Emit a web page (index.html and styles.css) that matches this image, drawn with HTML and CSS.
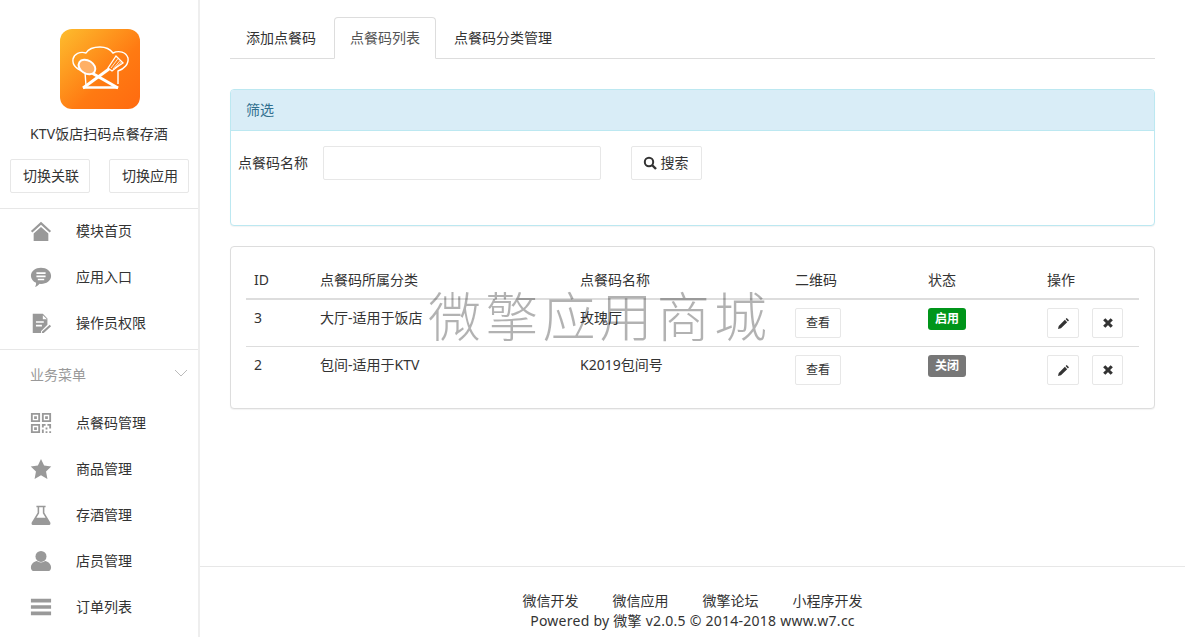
FILE: index.html
```html
<!DOCTYPE html>
<html lang="zh-CN">
<head>
    <meta charset="UTF-8">
    <title>点餐码列表</title>
    <link rel="stylesheet" href="styles.css">
</head>
<body>
    <div class="layout">
        <!-- Sidebar -->
        <aside class="sidebar">
            <div class="app-info">
                <div class="app-logo">
                    <svg viewBox="0 0 80 80" width="80" height="80">
                        <defs>
                            <linearGradient id="logoBg" x1="0" y1="0" x2="1" y2="1">
                                <stop offset="0" stop-color="#fdbd2e"/>
                                <stop offset="0.6" stop-color="#ff7a12"/>
                                <stop offset="1" stop-color="#ff6a10"/>
                            </linearGradient>
                        </defs>
                        <rect width="80" height="80" rx="12" fill="url(#logoBg)"/>
                        <path d="M25 43C17 41 12 36 13 30C14 25 20 22 26 24C29 19 35 18 40 18C46 18 50 20 53 24C59 21 66 23 68 29C69 35 64 40 58 42V55M25 43L26 57" fill="none" stroke="#fff" stroke-width="1.400"/>
                        <path d="M23 58.500H58" stroke="#fff" stroke-width="2.600"/>
                        <path d="M23 59L49 40" stroke="#fff" stroke-width="2.800"/>
                        <path d="M31 43.500L58 59" stroke="#fff" stroke-width="3"/>
                        <ellipse cx="27" cy="38" rx="9" ry="6.500" transform="rotate(32 27 38)" fill="#ffb066" stroke="#fff" stroke-width="2"/>
                        <path d="M48 39L52 33L56 27L63 34L57 38L52 42Z" fill="none" stroke="#fff" stroke-width="1.300"/>
                        <path d="M51 39L58 29.500M53 40L60 31.500M55 39L61.500 33" stroke="#fff" stroke-width="0.800"/>
                    </svg>
                </div>
                <div class="app-name">KTV饭店扫码点餐存酒</div>
                <div class="app-actions">
                    <a class="btn switch-btn">切换关联</a>
                    <a class="btn switch-btn">切换应用</a>
                </div>
            </div>

            <ul class="menu">
                <li class="menu-item">
                    <svg class="menu-icon" viewBox="0 0 24 24"><path d="M12 2L1 12l1.600 1.600L12 5.200l9.400 8.400L23 12zM12 7.600L4 14.600V23h16v-8.400z"/></svg>
                    模块首页
                </li>
                <li class="menu-item">
                    <svg class="menu-icon" viewBox="0 0 24 24"><path fill-rule="evenodd" d="M12 2c6 0 11 3.800 11 8.800s-5 8.700-11 8.700l-1.500-.1C9 21 7.500 22.500 5.500 23c.8-1.300 1.200-3 1.100-4.700C3.500 16.800 1 14 1 10.800 1 5.800 6 2 12 2zM7 6.800v1.900h10V6.800zM7 10.300v1.900h10v-1.900zm1.500 3.500v1.800h7v-1.800z"/></svg>
                    应用入口
                </li>
                <li class="menu-item">
                    <svg class="menu-icon" viewBox="0 0 24 24"><path fill-rule="evenodd" d="M3 2h11l5 5v7l-7 7v2H3zM6.500 10v1.800H15V10zm0 4v1.800H13V14zM14 3.500V8h4.500zM21.500 14l1.500 1.500-8 7.500h-2v-1.500z"/></svg>
                    操作员权限
                </li>
            </ul>

            <div class="menu-group">
                <div class="group-title">
                    业务菜单
                    <svg class="group-arrow" viewBox="0 0 14 8" width="14" height="8"><path d="M1 1l6 6 6-6" fill="none" stroke="#bbb"/></svg>
                </div>
                <ul class="menu">
                    <li class="menu-item">
                        <svg class="menu-icon" viewBox="0 0 24 24"><path fill-rule="evenodd" d="M1 1h10v10H1zm2 2v6h6V3zm1.500 1.500h3v3h-3zM13 1h10v10H13zm2 2v6h6V3zm1.500 1.500h3v3h-3zM1 13h10v10H1zm2 2v6h6v-6zm1.500 1.500h3v3h-3zM13 13h4v2h-2v2h-2zm6 0h4v5h-2v-3h-2zm-6 6h2v4h-2zm4-2h2v2h-2zm0 4h2v2h-2zm4 0h2v2h-2z"/></svg>
                        点餐码管理
                    </li>
                    <li class="menu-item">
                        <svg class="menu-icon" viewBox="0 0 24 24"><path d="M12 1l3.400 7.300 7.800 1-5.700 5.500 1.500 8L12 18.900 5 22.800l1.500-8L.8 9.300l7.800-1z"/></svg>
                        商品管理
                    </li>
                    <li class="menu-item">
                        <svg class="menu-icon" viewBox="0 0 24 24"><path fill-rule="evenodd" d="M7 2h10v1.500h-1.300v6L22 20c.8 1.500 0 3-1.700 3H3.700C2 23 1.200 21.500 2 20L8.300 9.500v-6H7zm3 1.500v6.500l-3 5h10l-3-5V3.500z"/></svg>
                        存酒管理
                    </li>
                    <li class="menu-item">
                        <svg class="menu-icon" viewBox="0 0 24 24"><circle cx="12" cy="7" r="6"/><path d="M1 19c0-4 3.500-6.500 6.500-7 1.200 1 2.800 1.500 4.500 1.500s3.300-.5 4.500-1.500c3 .5 6.500 3 6.500 7 0 2.500-1.500 4-3.500 4h-15C2.500 23 1 21.500 1 19z"/></svg>
                        店员管理
                    </li>
                    <li class="menu-item">
                        <svg class="menu-icon" viewBox="0 0 24 24"><path d="M1 3h22v4H1zM1 10h22v4H1zM1 17h22v4H1z"/></svg>
                        订单列表
                    </li>
                </ul>
            </div>
        </aside>

        <!-- Main content -->
        <div class="main">
            <div class="content">
                <ul class="tabs">
                    <li class="tab">添加点餐码</li>
                    <li class="tab active">点餐码列表</li>
                    <li class="tab">点餐码分类管理</li>
                </ul>

                <div class="panel panel-info">
                    <div class="panel-heading">筛选</div>
                    <div class="panel-body filter-body">
                        <label class="filter-label">点餐码名称</label>
                        <input class="filter-input" type="text">
                        <a class="btn search-btn">
                            <svg viewBox="0 0 14 14" width="14" height="14"><circle cx="6" cy="6" r="4.200" fill="none" stroke="#333" stroke-width="2"/><path d="M9 9l4 4" stroke="#333" stroke-width="2.400"/></svg>
                            搜索
                        </a>
                    </div>
                </div>

                <div class="panel panel-list">
                    <table class="code-table">
                        <thead>
                            <tr>
                                <th class="col-id">ID</th>
                                <th class="col-cate">点餐码所属分类</th>
                                <th class="col-name">点餐码名称</th>
                                <th class="col-qr">二维码</th>
                                <th class="col-status">状态</th>
                                <th>操作</th>
                            </tr>
                        </thead>
                        <tbody>
                            <tr>
                                <td>3</td>
                                <td>大厅-适用于饭店</td>
                                <td>玫瑰厅</td>
                                <td><a class="btn btn-sm">查看</a></td>
                                <td><span class="label label-on">启用</span></td>
                                <td>
                                    <div class="ops">
                                        <a class="btn btn-icon">
                                            <svg viewBox="0 0 12 12" width="11" height="11"><path d="M0 12l.8-3.200L7.500 2 10 4.500 3.200 11.200zM8.300 1.200L9.500 0 12 2.500 10.800 3.700z" fill="#333"/></svg>
                                        </a>
                                        <a class="btn btn-icon">
                                            <svg viewBox="0 0 12 12" width="10" height="10"><path d="M1.500 1.500l9 9M10.500 1.500l-9 9" stroke="#333" stroke-width="3.800"/></svg>
                                        </a>
                                    </div>
                                </td>
                            </tr>
                            <tr>
                                <td>2</td>
                                <td>包间-适用于KTV</td>
                                <td>K2019包间号</td>
                                <td><a class="btn btn-sm">查看</a></td>
                                <td><span class="label label-off">关闭</span></td>
                                <td>
                                    <div class="ops">
                                        <a class="btn btn-icon">
                                            <svg viewBox="0 0 12 12" width="11" height="11"><path d="M0 12l.8-3.200L7.500 2 10 4.500 3.200 11.200zM8.300 1.200L9.500 0 12 2.500 10.800 3.700z" fill="#333"/></svg>
                                        </a>
                                        <a class="btn btn-icon">
                                            <svg viewBox="0 0 12 12" width="10" height="10"><path d="M1.500 1.500l9 9M10.500 1.500l-9 9" stroke="#333" stroke-width="3.800"/></svg>
                                        </a>
                                    </div>
                                </td>
                            </tr>
                        </tbody>
                    </table>
                </div>
            </div>

            <div class="footer">
                <div class="footer-links">
                    <a>微信开发</a>
                    <a>微信应用</a>
                    <a>微擎论坛</a>
                    <a>小程序开发</a>
                </div>
                <div class="copyright">Powered by 微擎 v2.0.5 © 2014-2018 www.w7.cc</div>
            </div>
        </div>
    </div>

    <div class="watermark">微擎应用商城</div>
</body>
</html>
```

FILE: styles.css
```css
* {
    margin: 0;
    padding: 0;
    box-sizing: border-box;
}

html, body {
    height: 100%;
    overflow: hidden;
}

body {
    font-family: "Noto Sans", "Noto Sans CJK SC", sans-serif;
    font-size: 14px;
    line-height: 20px;
    color: #333;
    background: #fff;
}

ul {
    list-style: none;
}

.layout {
    display: flex;
    height: 637px;
}

/* Sidebar */
.sidebar {
    width: 200px;
    flex-shrink: 0;
    border-right: 2px solid #eee;
}

.app-info {
    padding-top: 29px;
    height: 209px;
    border-bottom: 1px solid #e7e7e7;
}

.app-logo {
    width: 80px;
    height: 80px;
    margin-left: 60px;
}

.app-logo svg {
    display: block;
}

.app-name {
    margin-top: 15px;
    text-align: center;
    letter-spacing: 0.1px;
}

.app-actions {
    display: flex;
    justify-content: space-between;
    padding: 0 9px 0 10px;
    margin-top: 15px;
}

.btn {
    display: inline-flex;
    align-items: center;
    justify-content: center;
    background: #fff;
    border: 1px solid #e7e7e7;
    border-radius: 2px;
    color: #333;
}

.switch-btn {
    width: 80px;
    height: 34px;
    padding-left: 2px;
}

.menu-item {
    display: flex;
    align-items: center;
    height: 46px;
    padding: 0 0 2px 30px;
}

.menu-icon {
    width: 22px;
    height: 22px;
    margin-right: 24px;
    fill: #999;
    flex-shrink: 0;
}

.menu-group {
    border-top: 1px solid #e7e7e7;
    margin-top: 2px;
}

.group-title {
    display: flex;
    justify-content: space-between;
    height: 50px;
    padding: 15px 10px 0 30px;
    margin-bottom: 1px;
    color: #999;
}

.group-arrow {
    margin-top: 4px;
}

/* Main */
.main {
    flex: 1;
    min-width: 0;
    display: flex;
    flex-direction: column;
}

.content {
    flex: 1;
    padding: 17px 37px 0 30px;
}

.tabs {
    display: flex;
    height: 42px;
    border-bottom: 1px solid #ddd;
    margin-bottom: 30px;
}

.tab {
    height: 42px;
    padding: 10px 15px;
    margin-right: 2px;
    border: 1px solid transparent;
    border-radius: 4px 4px 0 0;
}

.tab.active {
    background: #fff;
    border-color: #ddd;
    border-bottom-color: #fff;
    color: #555;
}

.panel {
    background: #fff;
    border: 1px solid #ddd;
    border-radius: 4px;
    box-shadow: 0 1px 1px rgba(0, 0, 0, 0.05);
    margin-bottom: 20px;
}

.panel-info {
    border-color: #bce8f1;
    height: 137px;
}

.panel-heading {
    height: 41px;
    padding: 10px 15px;
    background: #d9edf7;
    border-bottom: 1px solid #bce8f1;
    border-radius: 3px 3px 0 0;
    color: #31708f;
}

.filter-body {
    display: flex;
    align-items: center;
    padding: 15px 0 0 7px;
}

.filter-label {
    width: 85px;
}

.filter-input {
    width: 278px;
    height: 34px;
    border: 1px solid #e7e7e7;
    border-radius: 2px;
    margin-right: 30px;
}

.search-btn {
    width: 71px;
    height: 34px;
    gap: 4px;
    padding-right: 2px;
}

.panel-list {
    height: 163px;
    padding: 15px;
}

.code-table {
    width: 893px;
    border-collapse: collapse;
    table-layout: fixed;
}

.code-table th {
    height: 37px;
    padding: 8px;
    text-align: left;
    font-weight: 400;
    border-bottom: 2px solid #ddd;
}

.code-table td {
    height: 47px;
    padding: 8px;
    vertical-align: top;
    border-bottom: 1px solid #ddd;
}

.code-table tbody tr:last-child td {
    border-bottom: none;
}

.col-id {
    width: 66px;
}

.col-cate {
    width: 260px;
}

.col-name {
    width: 215px;
}

.col-qr {
    width: 133px;
}

.col-status {
    width: 119px;
}

.btn-sm {
    width: 46px;
    height: 30px;
    font-size: 12px;
}

.btn-icon {
    width: 32px;
    height: 30px;
}

.ops {
    display: flex;
    gap: 13px;
}

.btn-icon:last-child {
    width: 31px;
}

.label {
    display: block;
    width: 38px;
    height: 22px;
    line-height: 21px;
    text-align: center;
    font-size: 12px;
    font-weight: 700;
    color: #fff;
    border-radius: 3px;
}

.label-on {
    background: #00951a;
}

.label-off {
    background: #777;
}

/* Footer */
.footer {
    height: 71px;
    border-top: 1px solid #e7e7e7;
    padding-top: 24px;
    text-align: center;
    margin-right: 7px;
}

.footer-links {
    display: flex;
    justify-content: center;
    gap: 34px;
    height: 20px;
}

.copyright {
    letter-spacing: 0.25px;
}

.watermark {
    position: absolute;
    left: 428px;
    top: 282px;
    font-size: 53px;
    line-height: 70px;
    letter-spacing: 4.200px;
    color: rgba(0, 0, 0, 0.3);
    font-weight: 300;
    white-space: nowrap;
    pointer-events: none;
}
```
